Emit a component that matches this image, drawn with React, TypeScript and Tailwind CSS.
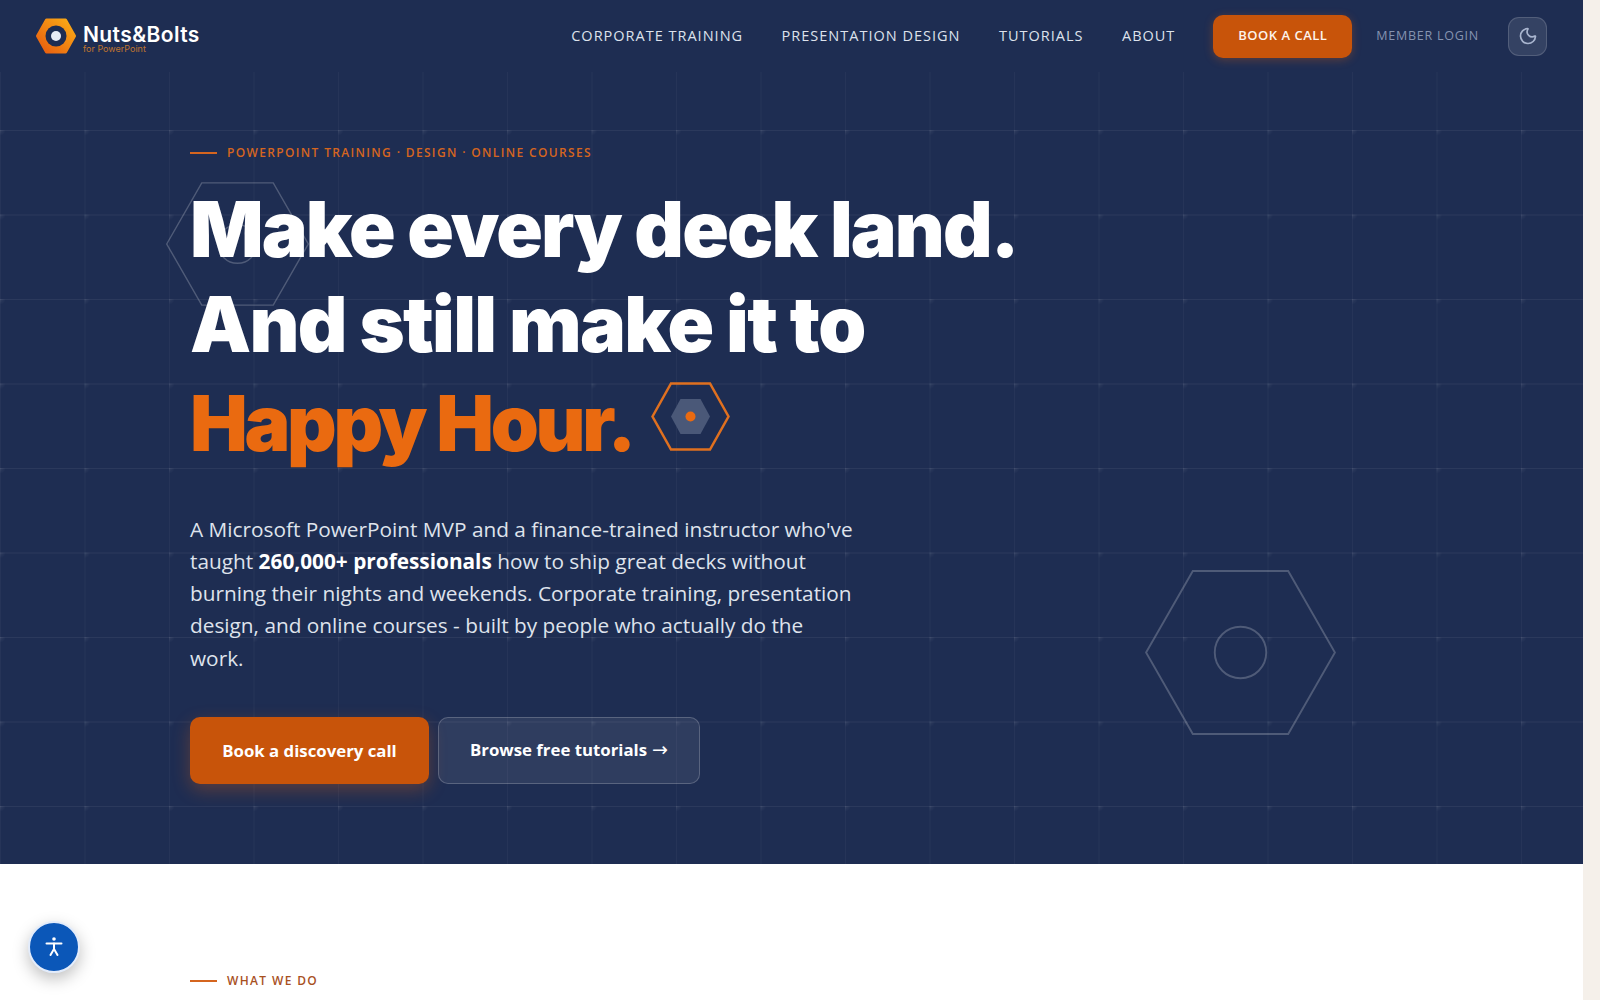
import { Moon } from 'lucide-react'

const NAV_LINKS = ['CORPORATE TRAINING', 'PRESENTATION DESIGN', 'TUTORIALS', 'ABOUT']

function Logo() {
  return (
    <div className="flex items-center gap-[6px]">
      <svg width="42" height="36" viewBox="0 0 41 36" className="shrink-0 ml-[-1px]">
        <defs>
          <linearGradient id="logoHex" x1="0" y1="1" x2="1" y2="0">
            <stop offset="0" stopColor="#e8590f" />
            <stop offset="1" stopColor="#fbb016" />
          </linearGradient>
        </defs>
        <polygon
          points="2,18 11,2 30,2 39,18 30,34 11,34"
          fill="url(#logoHex)"
          stroke="url(#logoHex)"
          strokeWidth="3"
          strokeLinejoin="round"
        />
        <circle cx="20.5" cy="18" r="10.5" fill="#1e2d52" />
        <circle cx="20.5" cy="18" r="5" fill="#e8ecf5" />
      </svg>
      <div className="flex flex-col font-['Inter',sans-serif] mt-[5px]">
        <span className="text-[21px] leading-[21px] font-semibold tracking-[0.4px] text-white">Nuts&amp;Bolts</span>
        <span className="text-[9px] leading-[9px] text-[#c0752f] mt-[-1px]">for PowerPoint</span>
      </div>
    </div>
  )
}

function Nav() {
  return (
    <nav className="h-[72px] bg-[#1e2d52] flex items-center pl-[36px] pr-[36px] font-['Open_Sans',sans-serif]">
      <Logo />
      <div className="ml-auto flex items-center gap-[38.5px]">
        {NAV_LINKS.map((link) => (
          <a key={link} className="text-[14.5px] tracking-[1px] text-[#dde2ec] font-medium">
            {link}
          </a>
        ))}
      </div>
      <a className="ml-[38px] w-[139px] h-[43px] flex items-center justify-center rounded-[10px] bg-[#c8540a] text-[#fdf3ea] text-[13px] font-semibold tracking-[0.5px] shadow-[0_2px_10px_rgba(232,101,15,0.3)]">
        BOOK A CALL
      </a>
      <a className="ml-[24px] text-[12.5px] font-medium tracking-[0.75px] text-[#8593b0]">MEMBER LOGIN</a>
      <button className="ml-[29px] w-[39px] h-[39px] flex items-center justify-center rounded-[11px] bg-white/10 border border-white/15 text-[#a9b5cf]">
        <Moon size={20} strokeWidth={2} />
      </button>
    </nav>
  )
}

function HexMark({ className, circle }: { className: string; circle: number }) {
  return (
    <svg viewBox="0 0 200 173" className={className} fill="none" stroke="rgba(255,255,255,0.22)" strokeWidth="2">
      <polygon points="1,86.5 50,1 150,1 199,86.5 150,172 50,172" />
      <circle cx="100" cy="86.5" r={circle} />
    </svg>
  )
}

function Hero() {
  return (
    <section className="relative h-[792px] bg-[#1e2d52] bg-[image:radial-gradient(circle_at_0.5px_0.5px,rgba(255,255,255,0.08),transparent_5px),linear-gradient(rgba(255,255,255,0.06)_1px,transparent_1px),linear-gradient(90deg,rgba(255,255,255,0.035)_1px,transparent_1px)] bg-[size:84.5px_84.5px] bg-[position:0_58px] pl-[190px] pt-[72px] overflow-hidden font-['Open_Sans',sans-serif]">
      <HexMark className="absolute left-[166px] top-[110px] w-[143px] h-[124px]" circle={27} />
      <HexMark className="absolute left-[1145px] top-[498px] w-[191px] h-[165px]" circle={27} />

      <div className="relative">
        <div className="flex items-center gap-[10px]">
          <span className="w-[27px] h-[1.5px] bg-[#d5651f]" />
          <span className="text-[12px] leading-[18px] font-semibold tracking-[1.35px] text-[#d5651f]">
            POWERPOINT TRAINING · DESIGN · ONLINE COURSES
          </span>
        </div>

        <h1 className="mt-[19px] text-[77px] leading-[97px] font-black text-white font-['Inter',sans-serif] whitespace-nowrap">
          <div className="tracking-[-1.87px]">Make every deck land.</div>
          <div className="tracking-[-1.7px] mt-[-2px]">And still make it to</div>
          <div className="flex items-center text-[#ea6a10] tracking-[-3.3px] mt-[2px]">
            Happy Hour.
            <svg width="79" height="69" viewBox="0 0 79 69" className="ml-[18px] mt-[-14px]">
              <polygon points="1.5,34.5 20,1.5 59,1.5 77.5,34.5 59,67.5 20,67.5" fill="none" stroke="#e0701f" strokeWidth="2.5" />
              <polygon points="20,34.5 29.5,17 49.5,17 59,34.5 49.5,52 29.5,52" fill="#4a5878" />
              <circle cx="39.5" cy="34.5" r="5" fill="#ea6a10" />
            </svg>
          </div>
        </h1>

        <p className="mt-[40.5px] w-[668px] text-[20.8px] leading-[32.3px] text-[#dfe3ec]">
          A Microsoft PowerPoint MVP and a finance-trained instructor who've taught{' '}
          <strong className="font-bold text-white">260,000+ professionals</strong> how to ship great decks without
          burning their nights and weekends. Corporate training, presentation design, and online courses - built by
          people who actually do the work.
        </p>

        <div className="mt-[43.5px] flex gap-[9px]">
          <a className="w-[239px] h-[67px] flex items-center justify-center rounded-[10px] bg-[#c8540a] text-white text-[16.8px] font-bold shadow-[0_6px_18px_rgba(232,101,15,0.3)]">
            Book a discovery call
          </a>
          <a className="w-[262px] h-[67px] flex items-center justify-center gap-[5px] rounded-[10px] bg-white/8 border border-white/20 text-white text-[16.8px] font-bold pb-[3px]">
            Browse free tutorials
            <span className="font-['DejaVu_Sans',sans-serif] font-normal text-[19px] leading-none">→</span>
          </a>
        </div>
      </div>
    </section>
  )
}

function WhatWeDo() {
  return (
    <section className="bg-white pl-[190px] pt-[108px] font-['Open_Sans',sans-serif]">
      <div className="flex items-center gap-[10px]">
        <span className="w-[27px] h-[1.5px] bg-[#d5651f]" />
        <span className="text-[12px] leading-[18px] font-semibold tracking-[1.35px] text-[#a8511f]">WHAT WE DO</span>
      </div>
    </section>
  )
}

function AccessibilityButton() {
  return (
    <button className="fixed left-[28px] bottom-[27px] w-[52px] h-[52px] rounded-full bg-[#0b57b8] border-2 border-[#e3ecfb] flex items-center justify-center shadow-[0_6px_16px_rgba(0,0,0,0.25)]">
      <svg width="20" height="22" viewBox="0 0 20 22" fill="none" stroke="white" strokeWidth="2" strokeLinecap="round">
        <circle cx="10" cy="3" r="1.8" fill="white" stroke="none" />
        <path d="M2.5 7.5h15" />
        <path d="M10 7.5v6" />
        <path d="M10 13l-3.5 6M10 13l3.5 6" />
      </svg>
    </button>
  )
}

export default function App() {
  return (
    <div className="h-[1000px] overflow-hidden flex bg-[#f5f0ea]">
      <main className="w-[1583px] bg-white overflow-hidden">
        <Nav />
        <Hero />
        <WhatWeDo />
      </main>
      <AccessibilityButton />
    </div>
  )
}
